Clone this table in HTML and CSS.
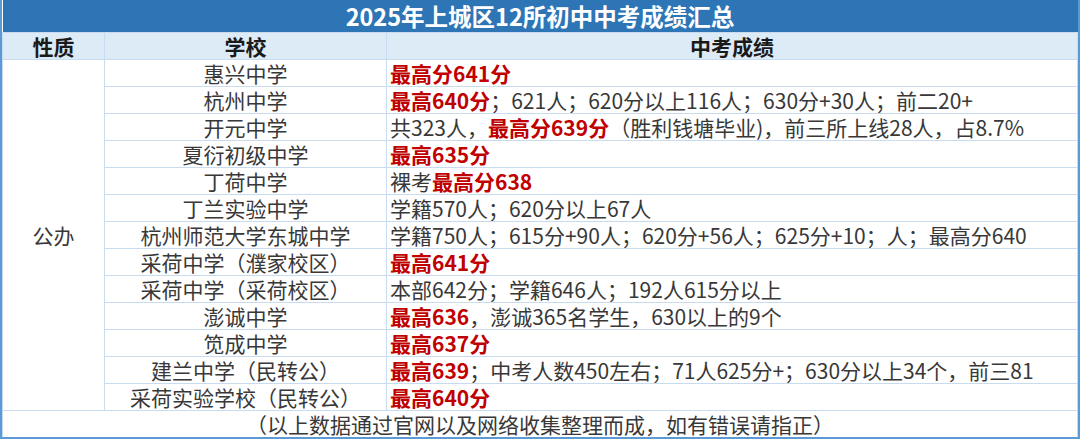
FILE: index.html
```html
<!DOCTYPE html>
<html lang="zh-CN">
<head>
<meta charset="utf-8">
<title>2025年上城区12所初中中考成绩汇总</title>
<link rel="stylesheet" href="styles.css">
</head>
<body>
<div class="sheet">
  <table class="grid">
    <colgroup>
      <col class="c1">
      <col class="c2">
      <col class="c3">
    </colgroup>
    <thead>
      <tr class="title-row"><th colspan="3" class="title">2025年上城区12所初中中考成绩汇总</th></tr>
      <tr class="head-row">
        <th>性质</th>
        <th>学校</th>
        <th>中考成绩</th>
      </tr>
    </thead>
    <tbody>
      <tr>
        <td class="kind" rowspan="13">公办</td>
        <td class="school">惠兴中学</td>
        <td class="score"><b class="hi">最高分641分</b></td>
      </tr>
      <tr>
        <td class="school">杭州中学</td>
        <td class="score"><b class="hi">最高640分</b>；621人；620分以上116人；630分+30人；前二20+</td>
      </tr>
      <tr>
        <td class="school">开元中学</td>
        <td class="score">共323人，<b class="hi">最高分639分</b>（胜利钱塘毕业)，前三所上线28人，占8.7%</td>
      </tr>
      <tr>
        <td class="school">夏衍初级中学</td>
        <td class="score"><b class="hi">最高635分</b></td>
      </tr>
      <tr>
        <td class="school">丁荷中学</td>
        <td class="score">裸考<b class="hi">最高分638</b></td>
      </tr>
      <tr>
        <td class="school">丁兰实验中学</td>
        <td class="score">学籍570人；620分以上67人</td>
      </tr>
      <tr>
        <td class="school">杭州师范大学东城中学</td>
        <td class="score">学籍750人；615分+90人；620分+56人；625分+10；人；最高分640</td>
      </tr>
      <tr>
        <td class="school">采荷中学（濮家校区）</td>
        <td class="score"><b class="hi">最高641分</b></td>
      </tr>
      <tr>
        <td class="school">采荷中学（采荷校区）</td>
        <td class="score">本部642分；学籍646人；192人615分以上</td>
      </tr>
      <tr>
        <td class="school">澎诚中学</td>
        <td class="score"><b class="hi">最高636</b>，澎诚365名学生，630以上的9个</td>
      </tr>
      <tr>
        <td class="school">笕成中学</td>
        <td class="score"><b class="hi">最高637分</b></td>
      </tr>
      <tr>
        <td class="school">建兰中学（民转公）</td>
        <td class="score"><b class="hi">最高639</b>；中考人数450左右；71人625分+；630分以上34个，前三81</td>
      </tr>
      <tr>
        <td class="school">采荷实验学校（民转公）</td>
        <td class="score"><b class="hi">最高640分</b></td>
      </tr>
    </tbody>
    <tfoot>
      <tr><td colspan="3" class="note">（以上数据通过官网以及网络收集整理而成，如有错误请指正）</td></tr>
    </tfoot>
  </table>
</div>
</body>
</html>
```

FILE: styles.css
```css
html, body {
  margin: 0;
  padding: 0;
  background: #ffffff;
}

.sheet {
  width: 1080px;
  height: 439px;
  box-sizing: border-box;
  border-left: 2px solid #5b9bd5;
  border-right: 2px solid #5b9bd5;
  border-bottom: 2px solid #5b9bd5;
  overflow: hidden;
}

.grid {
  width: 100%;
  border-collapse: collapse;
  table-layout: fixed;
  font-family: "Noto Sans CJK SC", sans-serif;
  font-size: 21px;
  color: #383838;
}

.c1 { width: 102px; }
.c2 { width: 282px; }
.c3 { width: auto; }

.grid th,
.grid td {
  padding: 0;
  border: 1px solid #c9dcef;
  height: 26px;
  line-height: 26px;
  white-space: nowrap;
  overflow: hidden;
}

.title-row .title {
  height: 32px;
  line-height: 32px;
  background: #2e75b6;
  color: #ffffff;
  font-weight: 700;
  font-size: 23.5px;
  text-align: center;
  border: none;
}

.head-row th {
  background: #ddebf7;
  font-weight: 700;
  font-size: 21px;
  color: #1a1a1a;
  text-align: center;
}

.kind {
  text-align: center;
  vertical-align: middle;
}

.school {
  text-align: center;
}

.grid .score {
  text-align: left;
  padding-left: 3px;
}

.hi {
  font-weight: 700;
  color: #c00000;
}

.note {
  text-align: center;
}
```
